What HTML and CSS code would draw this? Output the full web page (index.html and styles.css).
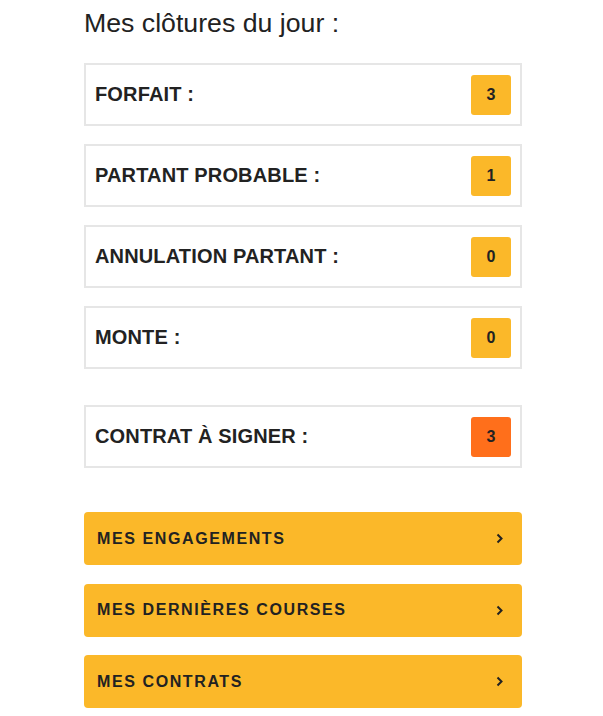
FILE: index.html
```html
<!DOCTYPE html>
<html lang="fr">
<head>
    <meta charset="UTF-8">
    <meta name="viewport" content="width=device-width, initial-scale=1.0">
    <title>Mes clôtures du jour</title>
    <link rel="stylesheet" href="styles.css">
</head>
<body>
    <div class="page">
        <h1>Mes clôtures du jour :</h1>

        <div class="closure-list">
            <div class="closure">
                <span class="closure-label">FORFAIT :</span>
                <span class="badge">3</span>
            </div>
            <div class="closure">
                <span class="closure-label">PARTANT PROBABLE :</span>
                <span class="badge">1</span>
            </div>
            <div class="closure">
                <span class="closure-label">ANNULATION PARTANT :</span>
                <span class="badge">0</span>
            </div>
            <div class="closure">
                <span class="closure-label">MONTE :</span>
                <span class="badge">0</span>
            </div>
            <div class="closure closure-contract">
                <span class="closure-label">CONTRAT À SIGNER :</span>
                <span class="badge badge-alert">3</span>
            </div>
        </div>

        <div class="menu">
            <a href="#" class="menu-btn">
                <span>MES ENGAGEMENTS</span>
                <svg class="chevron" width="8" height="11" viewBox="0 0 8 11"><polyline points="1.5,1.5 5.5,5.5 1.5,9.5" /></svg>
            </a>
            <a href="#" class="menu-btn">
                <span>MES DERNIÈRES COURSES</span>
                <svg class="chevron" width="8" height="11" viewBox="0 0 8 11"><polyline points="1.5,1.5 5.5,5.5 1.5,9.5" /></svg>
            </a>
            <a href="#" class="menu-btn">
                <span>MES CONTRATS</span>
                <svg class="chevron" width="8" height="11" viewBox="0 0 8 11"><polyline points="1.5,1.5 5.5,5.5 1.5,9.5" /></svg>
            </a>
        </div>
    </div>
</body>
</html>
```

FILE: styles.css
```css
body {
    margin: 0;
    font-family: 'Liberation Sans', Arial, sans-serif;
    color: #222;
    background: #fff;
}

.page {
    width: 438px;
    padding: 8px 0 0 84px;
}

h1 {
    margin: 0 0 25px;
    font-size: 26.7px;
    font-weight: 400;
    line-height: 30px;
    color: #222;
}

.closure-list {
    display: flex;
    flex-direction: column;
    gap: 18px;
}

.closure {
    display: flex;
    justify-content: space-between;
    align-items: center;
    padding: 9.5px 9px;
    border: 2px solid #e6e6e6;
}

.closure-contract {
    margin-top: 18px;
}

.closure-label {
    font-size: 20px;
    font-weight: 700;
    letter-spacing: 0.15px;
}

.badge {
    display: flex;
    justify-content: center;
    align-items: center;
    width: 40px;
    height: 40px;
    border-radius: 3px;
    background: #fbb829;
    font-size: 16px;
    font-weight: 700;
}

.badge-alert {
    background: #ff6f1b;
}

.menu {
    display: flex;
    flex-direction: column;
    gap: 18.5px;
    margin-top: 44px;
}

.menu-btn {
    display: flex;
    justify-content: space-between;
    align-items: center;
    height: 53px;
    padding: 0 18px 0 13px;
    border-radius: 4px;
    background: #fbb829;
    color: #222;
    text-decoration: none;
    font-size: 16px;
    font-weight: 700;
    letter-spacing: 1.6px;
}

.chevron polyline {
    fill: none;
    stroke: #222;
    stroke-width: 2;
}
```
